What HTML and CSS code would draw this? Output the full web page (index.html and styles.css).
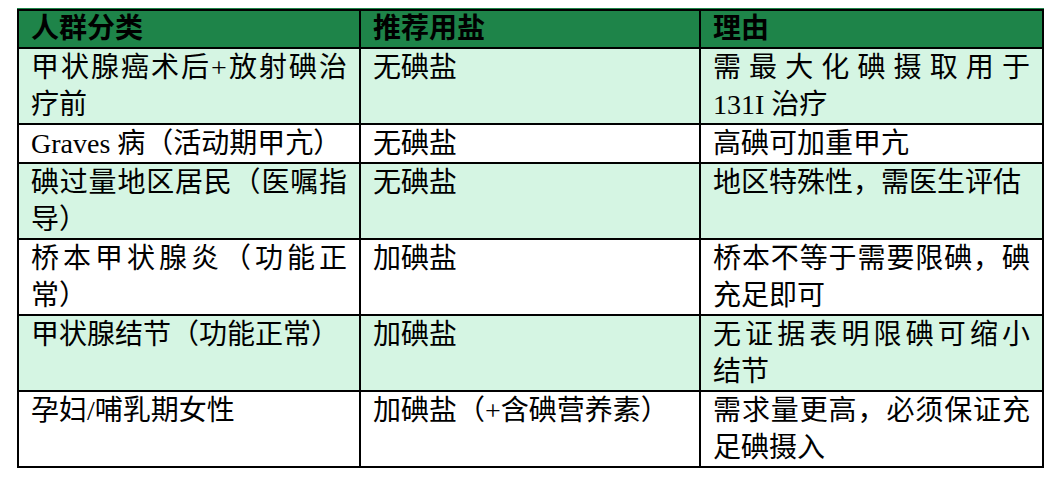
FILE: index.html
```html
<!DOCTYPE html>
<html lang="zh-CN">
<head>
<meta charset="utf-8">
<title>人群分类与推荐用盐</title>
<link rel="stylesheet" href="styles.css">
</head>
<body>
<table class="salt">
  <colgroup>
    <col class="c1">
    <col class="c2">
    <col class="c3">
  </colgroup>
  <thead>
    <tr class="head">
      <th>人群分类</th>
      <th>推荐用盐</th>
      <th>理由</th>
    </tr>
  </thead>
  <tbody>
    <tr class="tint">
      <td>甲状腺癌术后+放射碘治疗前</td>
      <td>无碘盐</td>
      <td><span class="line">需最大化碘摄取用于</span>131I 治疗</td>
    </tr>
    <tr>
      <td>Graves 病（活动期甲亢）</td>
      <td>无碘盐</td>
      <td>高碘可加重甲亢</td>
    </tr>
    <tr class="tint">
      <td>碘过量地区居民（医嘱指导）</td>
      <td>无碘盐</td>
      <td>地区特殊性，需医生评估</td>
    </tr>
    <tr>
      <td>桥本甲状腺炎（功能正常）</td>
      <td>加碘盐</td>
      <td>桥本不等于需要限碘，碘充足即可</td>
    </tr>
    <tr class="tint">
      <td>甲状腺结节（功能正常）</td>
      <td>加碘盐</td>
      <td><span class="line">无证据表明限碘可缩小</span>结节</td>
    </tr>
    <tr>
      <td>孕妇/哺乳期女性</td>
      <td>加碘盐（+含碘营养素）</td>
      <td>需求量更高，必须保证充足碘摄入</td>
    </tr>
  </tbody>
</table>
</body>
</html>
```

FILE: styles.css
```css
html, body {
  margin: 0;
  padding: 0;
  background: #ffffff;
}

body {
  padding: 9px 0 0 17px;
  font-family: "Liberation Serif", "Noto Sans CJK SC", serif;
  font-size: 28px;
  color: #000000;
}

.salt {
  width: 1025px;
  table-layout: fixed;
  border-collapse: collapse;
  box-shadow: 0 -1px 0 #1e8449;
}

.c1 { width: 342px; }
.c2 { width: 340px; }
.c3 { width: 343px; }

.salt th,
.salt td {
  border: 2px solid #000000;
  padding: 0 12px;
  vertical-align: top;
  text-align: justify;
  line-height: 37px;
  font-weight: 400;
}

.salt th {
  line-height: 36px;
  text-align: left;
  font-weight: 700;
}

.head {
  background: #1e8449;
}

.tint {
  background: #d5f5e3;
}

.line {
  display: block;
  text-align: justify;
  text-align-last: justify;
}
```
